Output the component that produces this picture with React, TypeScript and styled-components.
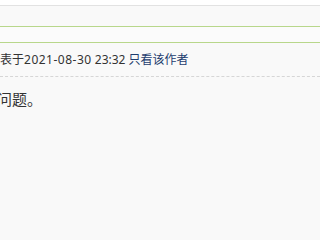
import styled, { createGlobalStyle } from 'styled-components';

const GlobalStyle = createGlobalStyle`
  html, body {
    margin: 0;
    padding: 0;
    background: #f9f9f9;
    overflow: hidden;
  }
  body {
    font-family: "Noto Sans", "Noto Sans CJK SC", sans-serif;
    color: #333;
  }
`;

const Page = styled.div`
  width: 100%;
  height: 239px;
  overflow: hidden;
  background: #f9f9f9;
`;

const TopGap = styled.div`
  height: 5px;
  background: #fff;
`;

const TabBar = styled.div`
  height: 20px;
  border-top: 1px solid #e2e2e2;
  border-bottom: 1px solid #b8d78b;
  background: #f9f9f9;
`;

const SubBar = styled.div`
  height: 15px;
  border-bottom: 1px solid #b8d78b;
  background: #fbfbfb;
`;

const Meta = styled.div`
  height: 33px;
  line-height: 33px;
  font-size: 12px;
  white-space: nowrap;
  color: #333;
  border-bottom: 1px dashed #d6d6d6;
`;

const DateText = styled.span`
  letter-spacing: 0.5px;
`;

const AuthorLink = styled.a`
  color: #1e3d6e;
  text-decoration: none;
`;

const Content = styled.p`
  margin: 0 0 0 -3px;
  padding-top: 10px;
  font-size: 15px;
  line-height: 24px;
  color: #333;
  white-space: nowrap;
`;

export default function App() {
  return (
    <Page>
      <GlobalStyle />
      <TopGap />
      <TabBar />
      <SubBar />
      <Meta>
        表于<DateText>2021-08-30</DateText> 23:32{' '}
        <AuthorLink href="#">只看该作者</AuthorLink>
      </Meta>
      <Content>问题。</Content>
    </Page>
  );
}
